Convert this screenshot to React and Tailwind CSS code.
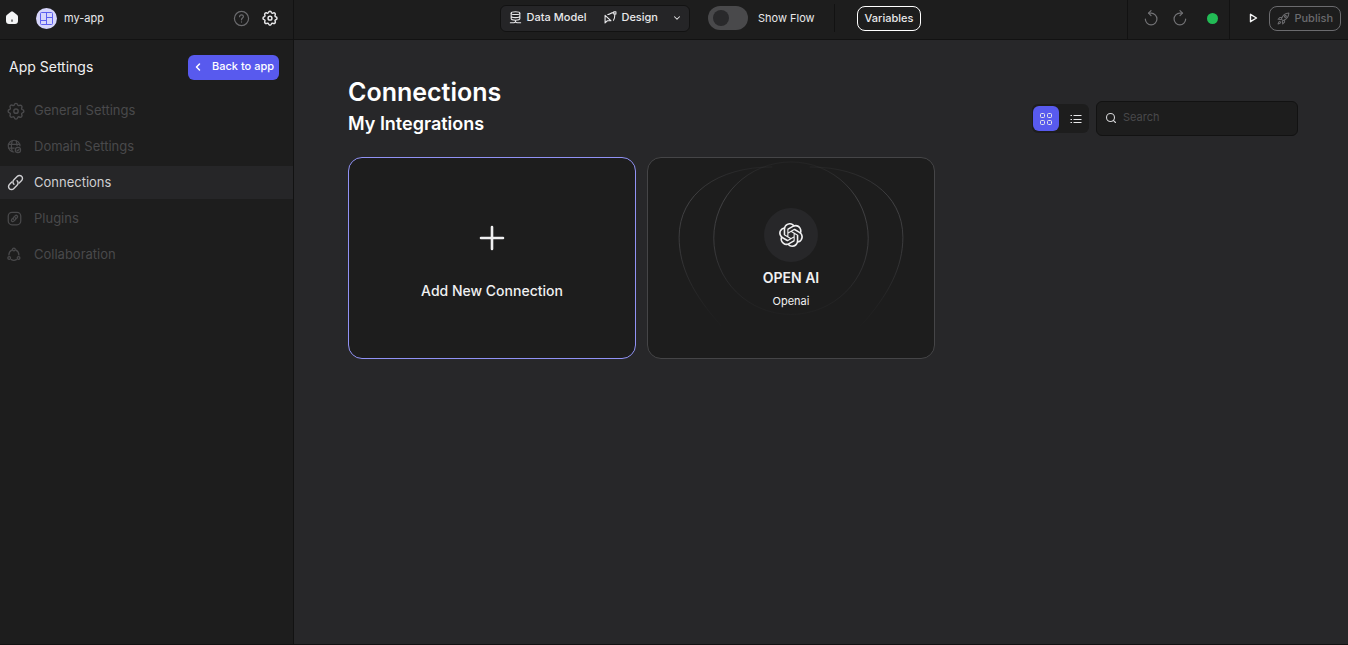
import { SiOpenai } from "react-icons/si";
import { ChevronDown, ChevronLeft, Search } from "lucide-react";

function Icon({ size = 16, children, className = "", width = 1.5 }) {
  return (
    <svg
      width={size}
      height={size}
      viewBox="0 0 24 24"
      fill="none"
      stroke="currentColor"
      strokeWidth={width}
      strokeLinecap="round"
      strokeLinejoin="round"
      className={`shrink-0 ${className}`}
      aria-hidden="true"
    >
      {children}
    </svg>
  );
}

function GearIcon({ size, width }) {
  return (
    <Icon size={size} width={width}>
      <path d="M12 1.8c1.3 0 1.9.7 2.2 1.9.3 1 1.4 1.4 2.3.9 1.1-.6 2-.6 2.9.3s.9 1.8.3 2.900c-.5.9-.1 2 .9 2.300 1.200.3 1.900.9 1.900 2.200s-.7 1.900-1.900 2.200c-1 .3-1.400 1.400-.9 2.300.6 1.100.6 2-.3 2.900s-1.800.9-2.900.3c-.9-.5-2-.1-2.300.9-.3 1.200-.9 1.900-2.200 1.900s-1.900-.7-2.200-1.900c-.3-1-1.400-1.400-2.300-.9-1.100.6-2 .6-2.900-.3s-.9-1.800-.3-2.900c.5-.9.1-2-.9-2.300C2.200 14.100 1.500 13.500 1.500 12.200s.7-1.900 1.900-2.200c1-.3 1.400-1.400.9-2.300-.6-1.100-.6-2 .3-2.900s1.800-.9 2.900-.3c.9.5 2 .1 2.300-.9.3-1.200.9-1.800 2.200-1.800Z" />
      <circle cx="12" cy="12.200" r="2.900" />
    </Icon>
  );
}

function HomeIcon() {
  return (
    <svg width="14" height="14" viewBox="0 0 14 14" className="shrink-0" aria-hidden="true">
      <path
        d="M1 5.600c0-.7.300-1.300.8-1.700L5.600.9c.8-.6 2-.6 2.800 0l3.800 3c.5.400.8 1 .8 1.700V10c0 1.800-1.200 3-3 3H4c-1.800 0-3-1.200-3-3V5.600Z"
        fill="#f4f5f6"
      />
      <path d="M7 8.500v2.300" stroke="#1d1d1d" strokeWidth="1.100" />
    </svg>
  );
}

function GlobeIcon() {
  return (
    <Icon size={15} width={1.9}>
      <path d="M20.800 11A9.400 9.400 0 1 0 11 20.800" />
      <path d="M8.500 2.800c-2 6-2 11.700 0 17.300M14.500 2.800c1 2.600 1.500 5 1.600 7.700M2.500 8.500h17.500M2.500 14.500h9" />
      <circle cx="17.500" cy="17.500" r="4.200" />
      <path d="M16 17.700l1.200 1.200 2-2.200" />
    </Icon>
  );
}

function LinkIcon() {
  return (
    <Icon size={17} width={2}>
      <path d="M9.800 14.500c-2-2-1.800-4.600 0-6.400l4.500-4.500c2-2 4.700-2 6.300-.3 1.700 1.600 1.700 4.300-.3 6.300l-3.100 3.100" />
      <path d="M14.200 9.500c2 2 1.800 4.600 0 6.400l-4.500 4.500c-2 2-4.700 2-6.300.3-1.700-1.600-1.700-4.300.3-6.300l3.100-3.100" />
    </Icon>
  );
}

function PluginIcon() {
  return (
    <Icon size={15} width={2}>
      <rect x="2" y="2" width="20" height="20" rx="6" />
      <path d="M10.800 13.400c-1-1-1-2.300 0-3.300l2.300-2.400c1-1 2.300-1 3.200-.1s.9 2.200-.1 3.200l-1.300 1.300" />
      <path d="M13.200 10.600c1 1 1 2.300 0 3.300l-2.300 2.400c-1 1-2.300 1-3.200.1s-.9-2.200.1-3.200l1.300-1.300" />
    </Icon>
  );
}

function CollaborationIcon() {
  return (
    <Icon size={15} width={2}>
      <circle cx="11" cy="4" r="2.300" />
      <circle cx="3.500" cy="17.500" r="2.200" />
      <circle cx="18.500" cy="17.500" r="2.200" />
      <path d="M14.500 5c2.700 1.500 4.500 4.300 4.500 7.700M7.500 5C4.800 6.500 3 9.300 3 12.700M7 20.200c2.500 1.400 5.500 1.400 8 0" />
    </Icon>
  );
}

function DataModelIcon() {
  return (
    <Icon size={13} width={2}>
      <ellipse cx="12" cy="4" rx="8" ry="2.600" />
      <path d="M4 4v10c0 1.700 3.600 3 8 3s8-1.300 8-3V4M4 9.300c0 1.700 3.600 3 8 3s8-1.300 8-3M12 17v3.500M2.500 21.800h6.500l3-1.500 3 1.500h6.500" />
    </Icon>
  );
}

function DesignIcon() {
  return (
    <Icon size={13} width={2}>
      <path d="M2 8v14l4.200-4h6.600L2 8Z" />
      <path d="M7 6.500c4 0 5-3.500 11-3.500" />
      <rect x="18" y="1.500" width="4" height="4" />
      <path d="M20 6c0 5-.5 8-2.500 11" />
    </Icon>
  );
}

function LayoutIcon() {
  return (
    <svg width="13" height="13" viewBox="0 0 13 13" fill="none" stroke="#5d5fef" aria-hidden="true">
      <rect x=".5" y=".5" width="12" height="12" rx="1" />
      <path d="M6.500.5v12M.5 8.500h6M6.500 5.500h6" />
    </svg>
  );
}

function GridIcon() {
  return (
    <svg width="14" height="14" viewBox="0 0 14 14" fill="none" stroke="currentColor" aria-hidden="true">
      <rect x="1.500" y="1.500" width="4" height="4" rx="1" />
      <rect x="8.500" y="1.500" width="4" height="4" rx="1" />
      <rect x="1.500" y="8.500" width="4" height="4" rx="1" />
      <rect x="8.500" y="8.500" width="4" height="4" rx="1" />
    </svg>
  );
}

function ListIcon() {
  return (
    <svg width="12" height="10" viewBox="0 0 12 10" stroke="currentColor" aria-hidden="true">
      <path d="M.5 1.500h1.500M.5 5.500h1.500M.5 8.500h1.500M3.500 1.500h8M3.500 5.500h8M3.500 8.500h8" />
    </svg>
  );
}

function RotateIcon({ flip = false }) {
  return (
    <Icon size={16} width={1.800} className={flip ? "-scale-x-100" : ""}>
      <path d="M3.500 13.500a8.700 8.700 0 1 0 8.700-8.700H8.500" />
      <path d="M12 1 8.300 4.800 12 8.500" />
    </Icon>
  );
}

function RocketIcon() {
  return (
    <Icon size={13} width={1.900}>
      <path d="M8 13c2-6 6-10.500 14-11-.5 8-5 12-11 14l-3-3Z" />
      <path d="M9 10H5.500L2 13.500l5 .5M14 15v3.500L10.500 22l-.5-5" />
      <path d="M5.500 17C3.500 17.500 2.500 19.500 2 22c2.500-.5 4.500-1.500 5-3.500" />
      <circle cx="15.500" cy="8.500" r="1.800" />
    </Icon>
  );
}

const NAV = [
  { label: "General Settings", icon: <GearIcon size={18} width={1.9} /> },
  { label: "Domain Settings", icon: <GlobeIcon /> },
  { label: "Connections", icon: <LinkIcon />, active: true },
  { label: "Plugins", icon: <PluginIcon /> },
  { label: "Collaboration", icon: <CollaborationIcon /> },
];

function Header() {
  return (
    <header className="flex h-10 shrink-0 border-b border-[#121212] bg-[#1d1d1d] text-[#e8e8ea]">
      <div className="flex w-[294px] shrink-0 items-center border-r border-[#121212] pr-[15px] pb-[3px] pl-1">
        <a href="#home" aria-label="Home" className="flex w-4 justify-center">
          <HomeIcon />
        </a>
        <span className="ml-4 flex size-[21px] items-center justify-center rounded-full bg-[#d6d5fb]">
          <LayoutIcon />
        </span>
        <span className="ml-[7px] text-[11px]">my-app</span>
        <div className="ml-auto flex items-center gap-3">
          <button type="button" aria-label="Help" className="text-[#6b6b6e]">
            <Icon size={17} width={1.700}>
              <circle cx="12" cy="12" r="10" />
              <path d="M9.300 9.500c0-1.600 1.200-2.700 2.700-2.700s2.700 1.100 2.700 2.500c0 2-2.700 2.200-2.700 4.500M12 16.700v.3" />
            </Icon>
          </button>
          <button type="button" aria-label="Settings">
            <GearIcon size={16} width={2.2} />
          </button>
        </div>
      </div>

      <div className="flex flex-1 items-center justify-center pb-[3px]">
        <div className="flex h-[27px] items-center rounded-md border border-[#121212] bg-[#252527] pb-px text-[11px] font-medium">
          <button type="button" className="flex items-center gap-[5px] pl-2">
            <DataModelIcon />
            Data Model
          </button>
          <button type="button" className="ml-[18px] flex items-center gap-1">
            <DesignIcon />
            Design
          </button>
          <button type="button" aria-label="More views" className="ml-[14px] pr-[7px]">
            <ChevronDown size={10} strokeWidth={2.5} />
          </button>
        </div>
        <label className="ml-[18px] flex items-center gap-[10px] text-[11px]">
          <input type="checkbox" role="switch" className="peer sr-only" />
          <span className="flex h-6 w-10 items-center rounded-full bg-[#49494b] px-[5px]">
            <span className="size-4 rounded-full bg-[#29292b]" />
          </span>
          Show Flow
        </label>
        <div className="ml-[19px] h-7 w-px bg-[#121212]" />
        <button
          type="button"
          className="ml-[22px] h-[25px] rounded-lg border border-white px-[7px] text-[11px] font-medium"
        >
          Variables
        </button>
      </div>

      <div className="flex w-[221px] shrink-0 items-stretch border-l border-[#121212]">
        <div className="flex w-[102px] items-center border-r border-[#121212] pb-[3px] pl-[15px] text-[#727275]">
          <button type="button" aria-label="Undo">
            <RotateIcon />
          </button>
          <button type="button" aria-label="Redo" className="ml-[13px]">
            <RotateIcon flip />
          </button>
          <span className="ml-[19px] size-[11px] rounded-full bg-[#22bb55]" />
        </div>
        <div className="flex flex-1 items-center justify-end pr-[7px] pb-[3px]">
          <button type="button" aria-label="Run preview" className="mr-[11px]">
            <svg width="9" height="10" viewBox="0 0 9 10" fill="none" stroke="#f4f5f6" strokeWidth="1.400" aria-hidden="true">
              <path d="M1.500 1.300v7.400L7.500 5l-6-3.700Z" strokeLinejoin="round" />
            </svg>
          </button>
          <button
            type="button"
            className="flex h-[25px] items-center gap-1 rounded-lg border border-[#6b6b6e] px-[7px] text-[11px] font-medium text-[#6b6b6e]"
          >
            <RocketIcon />
            Publish
          </button>
        </div>
      </div>
    </header>
  );
}

function Sidebar() {
  return (
    <aside className="w-[294px] shrink-0 border-r border-[#121212] bg-[#1d1d1d]">
      <div className="flex items-start justify-between pt-[15px] pr-[14px] pl-[9px]">
        <h2 className="text-sm leading-6 text-[#f0f0f1]">App Settings</h2>
        <button
          type="button"
          className="flex h-[25px] items-center gap-2 rounded-md bg-[#585aee] pr-[5px] pb-[2px] pl-1 text-[11px] font-medium text-white"
        >
          <ChevronLeft size={12} strokeWidth={3} />
          Back to app
        </button>
      </div>
      <nav className="mt-[14px] flex flex-col gap-[3px]">
        {NAV.map((item) => (
          <a
            key={item.label}
            href="#settings"
            aria-current={item.active ? "page" : undefined}
            className={`flex h-[33px] items-center gap-2 pl-[7px] text-[13px] ${
              item.active ? "bg-[#262628] text-[#cfcfd2]" : "text-[#49494b]"
            }`}
          >
            <span className="flex w-[19px]">{item.icon}</span>
            {item.label}
          </a>
        ))}
      </nav>
    </aside>
  );
}

function Rings() {
  return (
    <svg
      viewBox="0 0 288 202"
      fill="none"
      className="absolute inset-0 h-full w-full"
      aria-hidden="true"
    >
      <defs>
        <linearGradient id="ring" x1="0" y1="8" x2="0" y2="175" gradientUnits="userSpaceOnUse">
          <stop offset="0" stopColor="#424244" stopOpacity="0.2" />
          <stop offset=".2" stopColor="#424244" />
          <stop offset=".5" stopColor="#3a3a3c" />
          <stop offset="1" stopColor="#2a2a2c" stopOpacity="0" />
        </linearGradient>
      </defs>
      <g stroke="url(#ring)">
        <ellipse cx="144" cy="81" rx="78" ry="77" />
        <path d="M74 170C45 138 31 110 31 80 31 36 70 9 125 9" />
        <path d="M214 170c29-32 43-60 43-90 0-44-39-71-94-71" />
      </g>
    </svg>
  );
}

function Main() {
  return (
    <main className="min-w-0 flex-1 bg-[#272729] pt-9 pr-[50px] pb-9 pl-[54px]">
      <div className="flex items-end justify-between">
        <div>
          <h1 className="text-[25px] leading-8 font-semibold text-white">Connections</h1>
          <h2 className="mt-1 text-lg leading-6 font-semibold text-white">My Integrations</h2>
        </div>
        <div className="flex items-center gap-[7px]">
          <div className="flex h-[29px] items-center rounded-md bg-[#1d1d1d] px-px text-[#e8e8ea]">
            <button
              type="button"
              aria-label="Grid view"
              className="flex h-[25px] w-[26px] items-center justify-center rounded-md bg-[#585aee]"
            >
              <GridIcon />
            </button>
            <button
              type="button"
              aria-label="List view"
              className="flex h-[25px] w-[29px] items-center justify-center pl-1"
            >
              <ListIcon />
            </button>
          </div>
          <div className="flex h-[35px] w-[202px] items-center gap-[6px] rounded-md border border-[#121212] bg-[#1d1d1d] px-2 pb-[2px] text-[#d4d4d6]">
            <label htmlFor="connection-search" aria-label="Search">
              <Search size={12} strokeWidth={2.2} />
            </label>
            <input
              id="connection-search"
              type="search"
              placeholder="Search"
              className="w-full min-w-0 bg-transparent text-[11px] outline-none placeholder:text-[#49494b]"
            />
          </div>
        </div>
      </div>

      <div className="mt-[21px] flex flex-wrap gap-[11px]">
        <button
          type="button"
          className="flex h-[202px] w-[288px] flex-col items-center rounded-[14px] border border-[#9192f5] bg-[#1d1d1d] pt-[67px] text-[#f0f0f1]"
        >
          <svg width="26" height="26" viewBox="0 0 26 26" stroke="currentColor" strokeWidth="2.600" strokeLinecap="round" aria-hidden="true">
            <path d="M13 2v22M2 13h22" />
          </svg>
          <span className="mt-[30px] text-sm leading-5 font-medium">Add New Connection</span>
        </button>

        <article className="relative flex h-[202px] w-[288px] flex-col items-center rounded-[14px] border border-[#454547] bg-[#1d1d1d] pt-[50px] text-[#f0f0f1]">
          <Rings />
          <div className="relative flex size-[54px] items-center justify-center rounded-full bg-[#272729]">
            <SiOpenai size={24} aria-hidden="true" />
          </div>
          <h3 className="mt-[6px] text-sm leading-5 font-semibold">OPEN AI</h3>
          <p className="mt-[5px] text-[11px] leading-4">Openai</p>
        </article>
      </div>
    </main>
  );
}

export default function App() {
  return (
    <div className="flex min-h-screen flex-col border-b border-[#121212] bg-[#1d1d1d] font-['Inter',sans-serif]">
      <Header />
      <div className="flex flex-1">
        <Sidebar />
        <Main />
      </div>
    </div>
  );
}
